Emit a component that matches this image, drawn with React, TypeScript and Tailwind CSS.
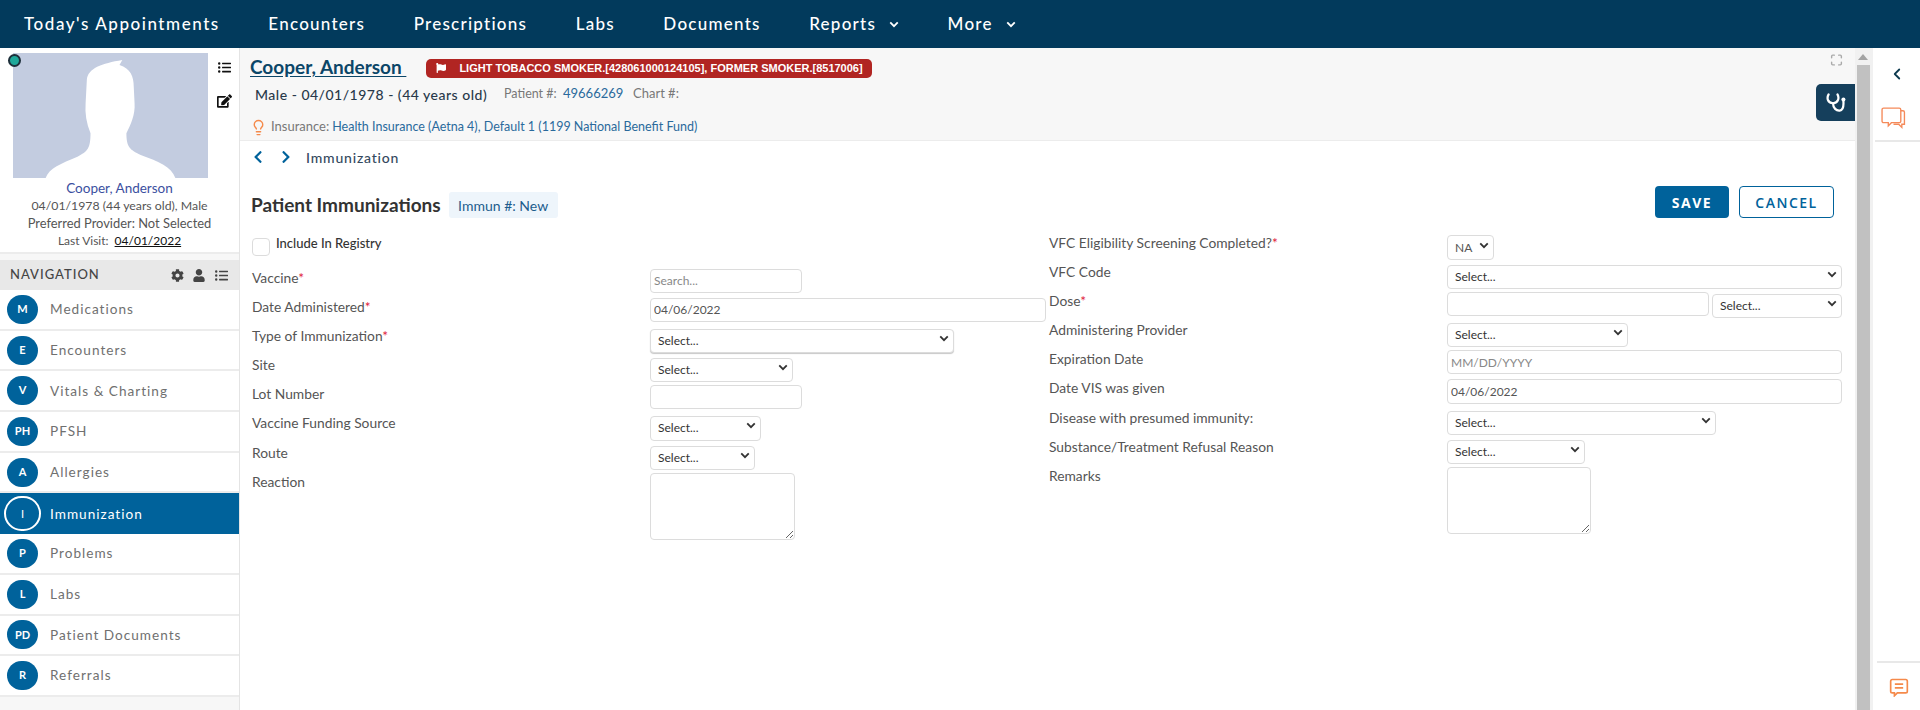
import { ChevronLeft, Lightbulb, Maximize } from "lucide-react";
import { FaChevronLeft, FaChevronRight, FaCog, FaEdit, FaFlag, FaListUl, FaUser } from "react-icons/fa";

const BODY_FONT = "font-['Lato','Noto_Sans',sans-serif]";

const topLinks = [
  { label: "Today's Appointments", caret: false, track: "tracking-[1.55px]" },
  { label: "Encounters", caret: false, track: "tracking-[1.25px]" },
  { label: "Prescriptions", caret: false, track: "tracking-[1.25px]" },
  { label: "Labs", caret: false, track: "tracking-[1.25px]" },
  { label: "Documents", caret: false, track: "tracking-[1.25px]" },
  { label: "Reports", caret: true, track: "tracking-[1.25px]" },
  { label: "More", caret: true, track: "tracking-[1.25px]" },
];

const navItems = [
  { short: "M", label: "Medications" },
  { short: "E", label: "Encounters" },
  { short: "V", label: "Vitals & Charting" },
  { short: "PH", label: "PFSH" },
  { short: "A", label: "Allergies" },
  { short: "I", label: "Immunization", active: true },
  { short: "P", label: "Problems" },
  { short: "L", label: "Labs" },
  { short: "PD", label: "Patient Documents" },
  { short: "R", label: "Referrals" },
];

function Caret({ className = "" }: { className?: string }) {
  return (
    <svg viewBox="0 0 12 8" className={className} fill="none" stroke="currentColor" strokeWidth="2.2">
      <path d="M1.5 1.5 6 6l4.5-4.5" />
    </svg>
  );
}

function Field({ label, required, children }: { label: string; required?: boolean; children: React.ReactNode }) {
  return (
    <div className="flex mb-[5px] min-h-[24.2px]">
      <label className="w-[398px] shrink-0 text-[13.8px] leading-[18px] text-[#555]">
        {label}
        {required && <span className="text-[#e0213a]">*</span>}
      </label>
      <div className="flex flex-1 gap-[3px]">{children}</div>
    </div>
  );
}

function Select({ width, shadow }: { width: string; shadow?: boolean }) {
  return (
    <div className={`relative h-[24.2px] ${width}`}>
      <select
        className={`appearance-none w-full h-full rounded-[4px] border border-[#dcdcdc] bg-white pl-[7px] text-[12px] text-[#333] ${shadow ? "shadow-[0_1px_1px_#c8c8c8]" : ""}`}
      >
        <option>Select...</option>
      </select>
      <Caret className="absolute right-[5px] top-[8px] w-[10px] h-[7px] text-[#333] pointer-events-none" />
    </div>
  );
}

function TextBox({ width, value, placeholder }: { width: string; value?: string; placeholder?: string }) {
  return (
    <input
      readOnly
      value={value ?? ""}
      placeholder={placeholder}
      className={`h-[24.2px] rounded-[4px] border border-[#dcdcdc] bg-white px-[3px] text-[12px] text-[#555] placeholder:text-[#888] ${width}`}
    />
  );
}

function Area({ width }: { width: string }) {
  return <textarea readOnly className={`h-[67px] rounded-[4px] border border-[#dcdcdc] bg-white ${width}`} />;
}

export default function App() {
  return (
    <div className={`${BODY_FONT} w-[1920px] h-[710px] overflow-hidden flex flex-col bg-white`}>
      {/* Top bar */}
      <header className="h-[48px] shrink-0 bg-[#023a5c] flex items-center pl-[24px] gap-[48.5px]">
        {topLinks.map((l) => (
          <a key={l.label} className={`flex items-center text-white text-[17px] font-medium ${l.track}`}>
            {l.label}
            {l.caret && <Caret className="ml-[13px] w-[10px] h-[7px]" />}
          </a>
        ))}
      </header>

      <div className="flex flex-1 min-h-0">
        {/* Left sidebar */}
        <aside className="w-[240px] shrink-0 bg-[#f7f7f7] border-r border-[#e4e4e4]">
          <div className="h-[206px] bg-white border-b-2 border-[#ececec] pt-[5px] relative">
            <span className="absolute left-[8px] top-[6px] w-[13px] h-[13px] rounded-full bg-[#1fa89a] border-2 border-[#1d2f3a]" />
            <div className="flex pl-[13px]">
              <svg viewBox="32 159 478 375" preserveAspectRatio="none" className="w-[195px] h-[125px] block bg-[#c3cce0]">
                <path
                  fill="#fff"
                  d="M112 534C120 505 150 490 190 470C215 455 222 445 222 400C212 370 208 340 210 310L213 240C215 205 250 190 300 180L293 195C320 205 328 230 328 260L330 310C332 345 320 375 310 400C310 440 318 450 345 465C390 485 420 500 430 534Z"
                />
              </svg>
              <div className="flex flex-col items-center ml-[9px] pt-[8px] gap-[20px] text-[#111]">
                <FaListUl className="w-[15px] h-[13px]" />
                <FaEdit className="w-[15px] h-[14px]" />
              </div>
            </div>
            <div className="text-center leading-[17.3px] text-[#555] mt-[2px] whitespace-nowrap">
              <div className="text-[13.5px] text-[#3b4fa0]">Cooper, Anderson</div>
              <div className="text-[12.3px]">04/01/1978 (44 years old), Male</div>
              <div className="text-[12.9px]">Preferred Provider: Not Selected</div>
              <div className="text-[12px]">
                Last Visit: <span className="ml-[3px] underline text-[#111]">04/01/2022</span>
              </div>
            </div>
          </div>

          <div className="mt-[6px] h-[30px] bg-[#e8e8e8] flex items-center justify-between pl-[10px] pr-[10px] text-[#444]">
            <span className="text-[13px] font-medium tracking-[1px]">NAVIGATION</span>
            <span className="flex items-center gap-[9px]">
              <FaCog className="w-[13px] h-[13px]" />
              <FaUser className="w-[12px] h-[13px]" />
              <FaListUl className="w-[15px] h-[13px]" />
            </span>
          </div>

          <nav>
            {navItems.map((n) => (
              <div
                key={n.label}
                className={`h-[40.7px] flex items-center pl-[7px] ${
                  n.active ? "bg-[#00629b] text-white" : "bg-white border-b-2 border-[#ececec] text-[#707070]"
                }`}
              >
                <span
                  className={`w-[31px] h-[29px] shrink-0 rounded-full flex items-center justify-center text-[11px] font-bold text-white ${
                    n.active ? "bg-[#00629b] outline-2 outline-white outline-offset-1 font-normal" : "bg-[#00629b]"
                  }`}
                >
                  {n.short}
                </span>
                <span className="ml-[12px] text-[13.6px] tracking-[1px] whitespace-nowrap">{n.label}</span>
              </div>
            ))}
          </nav>
        </aside>

        {/* Main */}
        <main className="w-[1615px] shrink-0 min-w-0">
          <section className="h-[93px] bg-[#f7f7f7] border-b border-[#ececec] pl-[10px] pt-[9px] relative">
            <div className="flex items-center h-[22px]">
              <a className="text-[19px] font-bold leading-[22px] text-[#0b4668] underline underline-offset-2 -mt-[2px]">
                Cooper, Anderson&nbsp;
              </a>
              <span className="ml-[20px] h-[19px] w-[446px] rounded-[5px] bg-[#b12522] flex items-center pl-[10px] font-['Liberation_Sans',sans-serif] text-[11px] font-bold text-white whitespace-nowrap">
                <FaFlag className="w-[10px] h-[10px] mr-[13px]" />
                LIGHT TOBACCO SMOKER.[428061000124105], FORMER SMOKER.[8517006]
              </span>
            </div>
            <div className="flex items-center h-[20px] mt-[5px] pl-[5px] whitespace-nowrap">
              <span className="w-[249px] text-[14px] font-medium tracking-[0.5px] text-[#28394a]">Male - 04/01/1978 - (44 years old)</span>
              <span className="w-[59px] text-[12.5px] text-[#777]">Patient #:</span>
              <span className="w-[70px] text-[13px] text-[#2a6a9c]">49666269</span>
              <span className="text-[13px] text-[#777]">Chart #:</span>
            </div>
            <div className="flex items-center h-[20px] mt-[13px] text-[13px] whitespace-nowrap">
              <Lightbulb className="w-[17px] h-[19px] text-[#f58a4b] mr-[4px]" strokeWidth={2} />
              <span className="text-[#777] mr-[3px]">Insurance:</span>
              <span className="text-[12.5px] text-[#2a6a9c]">Health Insurance (Aetna 4), Default 1 (1199 National Benefit Fund)</span>
            </div>
            <Maximize className="absolute right-[12px] top-[5px] w-[13px] h-[14px] text-[#aaa]" strokeWidth={2.6} />
            <div className="absolute right-0 top-[36px] w-[39px] h-[37px] rounded-l-[5px] bg-[#153f5c] flex items-center justify-center">
              <svg viewBox="0 0 54 50" className="w-[20px] h-[19px]" fill="none" stroke="#fff" strokeWidth="6" strokeLinecap="round">
                <path d="M7 3C2 12 3 26 19 27C34 26 36 12 31 3" />
                <path d="M19 27C19 40 28 48 37 47C46 46 48 36 47 22" />
                <circle cx="47" cy="17" r="5.5" fill="#fff" stroke="none" />
              </svg>
            </div>
          </section>

          <div className="flex items-center h-[32px] pl-[13px] text-[#00629b]">
            <FaChevronLeft className="w-[10px] h-[14px]" />
            <FaChevronRight className="w-[10px] h-[14px] ml-[18px]" />
            <span className="ml-[15px] text-[14px] font-medium tracking-[0.8px] text-[#34495e]">Immunization</span>
          </div>

          <div className="flex items-center justify-between pl-[11px] pr-[21px] mt-[12px]">
            <div className="flex items-center mt-[6px]">
              <h1 className="text-[19px] font-bold text-[#333]">Patient Immunizations</h1>
              <span className="ml-[8px] h-[26px] w-[109px] rounded-[3px] bg-[#eef5fb] flex items-center justify-center text-[14px] text-[#1d5d8d]">
                Immun #: New
              </span>
            </div>
            <div className="flex gap-[10px] font-['Open_Sans',sans-serif] text-[14px] tracking-[1.5px]">
              <button className="w-[74px] h-[32px] rounded-[4px] bg-[#00629b] font-bold text-white">SAVE</button>
              <button className="w-[95px] h-[32px] rounded-[4px] border border-[#00629b] font-semibold text-[#00629b]">CANCEL</button>
            </div>
          </div>

          <form className="flex pl-[12px] mt-[14px]">
            <div className="w-[797px] shrink-0">
              <div className="h-[35px] flex items-start pt-[4px]">
                <span className="w-[18px] h-[18px] rounded-[4px] border border-[#dcdcdc] bg-white" />
                <span className="ml-[6px] text-[13px] font-medium leading-[10px] text-[#333]">Include In Registry</span>
              </div>
              <Field label="Vaccine" required><TextBox width="w-[152px]" placeholder="Search..." /></Field>
              <Field label="Date Administered" required><TextBox width="w-[396px]" value="04/06/2022" /></Field>
              <Field label="Type of Immunization" required><Select width="w-[304px]" shadow /></Field>
              <Field label="Site"><Select width="w-[143px]" /></Field>
              <Field label="Lot Number"><TextBox width="w-[152px]" /></Field>
              <Field label="Vaccine Funding Source"><Select width="w-[111px]" /></Field>
              <Field label="Route"><Select width="w-[105px]" /></Field>
              <Field label="Reaction"><Area width="w-[145px]" /></Field>
            </div>
            <div className="w-[793px] shrink-0">
              <Field label="VFC Eligibility Screening Completed?" required>
                <div className="relative h-[24.2px] w-[47px]">
                  <select className="appearance-none w-full h-full rounded-[4px] border border-[#dcdcdc] bg-white pl-[7px] text-[12px] text-[#555]">
                    <option>NA</option>
                  </select>
                  <Caret className="absolute right-[5px] top-[8px] w-[10px] h-[7px] text-[#333] pointer-events-none" />
                </div>
              </Field>
              <Field label="VFC Code"><Select width="w-[395px]" /></Field>
              <Field label="Dose" required>
                <TextBox width="w-[262px]" />
                <Select width="w-[130px]" />
              </Field>
              <Field label="Administering Provider"><Select width="w-[181px]" /></Field>
              <Field label="Expiration Date"><TextBox width="w-[395px]" placeholder="MM/DD/YYYY" /></Field>
              <Field label="Date VIS was given"><TextBox width="w-[395px]" value="04/06/2022" /></Field>
              <Field label="Disease with presumed immunity:"><Select width="w-[269px]" /></Field>
              <Field label="Substance/Treatment Refusal Reason"><Select width="w-[138px]" /></Field>
              <Field label="Remarks"><Area width="w-[144px]" /></Field>
            </div>
          </form>
        </main>

        {/* Scrollbar */}
        <div className="w-[18px] shrink-0 bg-[#f1f1f1] flex flex-col items-center pl-[1px] pr-[3px]">
          <span className="mt-[6px] w-0 h-0 border-x-[5px] border-x-transparent border-b-[6px] border-b-[#a3a3a3]" />
          <div className="mt-[5px] flex-1 w-[13px] bg-[#c1c1c1]" />
        </div>

        {/* Right rail */}
        <aside className="flex-1 flex flex-col bg-white">
          <div className="h-[94px] ml-[2px] border-b-2 border-[#e8e8e8] flex flex-col items-center pt-[16px] pr-[2px]">
            <ChevronLeft className="w-[18px] h-[20px] text-[#0d3a4f]" strokeWidth={2.4} />
            <svg viewBox="0 0 24 22" className="w-[25px] h-[24px] mt-[22px] mr-[6px] text-[#f58a5a]" fill="none" stroke="currentColor" strokeWidth="1.3">
              <path d="M2.5 1.5h15a1.5 1.5 0 0 1 1.5 1.5v11a1.5 1.5 0 0 1-1.5 1.5H10l-3 3v-3H2.5A1.5 1.5 0 0 1 1 14V3a1.5 1.5 0 0 1 1.5-1.5Z" />
              <path d="M19 4h2a1.5 1.5 0 0 1 1.5 1.5V17H20v3l-3-3h-5" />
            </svg>
          </div>
          <div className="flex-1" />
          <div className="h-[49px] ml-[4px] border-t-2 border-[#e8e8e8] flex items-center justify-center">
            <svg viewBox="0 0 24 24" className="w-[22px] h-[20px] text-[#f58a4b]" fill="none" stroke="currentColor" strokeWidth="2">
              <path d="M4 3h16a2 2 0 0 1 2 2v12a2 2 0 0 1-2 2H10l-3.5 3.5V19H4a2 2 0 0 1-2-2V5a2 2 0 0 1 2-2Z" />
              <path d="M7 8.5h10M7 13h10" />
            </svg>
          </div>
        </aside>
      </div>
    </div>
  );
}
